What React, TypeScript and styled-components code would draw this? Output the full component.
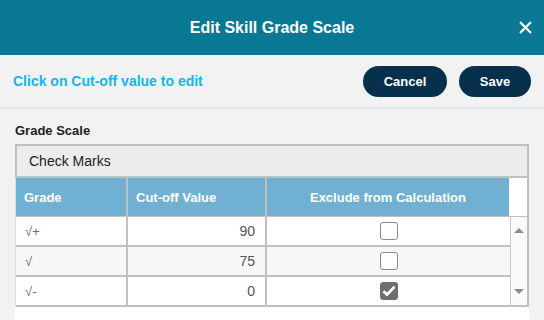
import styled, { createGlobalStyle } from 'styled-components';

const GlobalStyle = createGlobalStyle`
  body {
    margin: 0;
    background: #f2f2f2;
    font-family: 'Liberation Sans', Arial, sans-serif;
  }
`;

const Page = styled.div`
  width: 544px;
  height: 320px;
  overflow: hidden;
  background: #f2f2f2;
`;

const Header = styled.div`
  display: grid;
  grid-template-columns: 1fr auto 1fr;
  align-items: center;
  height: 55px;
  background: #087895;
`;

const Title = styled.div`
  grid-column: 2;
  color: #ffffff;
  font-size: 16px;
  font-weight: 700;
`;

const CloseButton = styled.button`
  justify-self: end;
  display: flex;
  align-items: center;
  justify-content: center;
  width: 14px;
  height: 14px;
  margin-right: 12px;
  padding: 0;
  border: 0;
  background: none;
  cursor: pointer;
`;

const Toolbar = styled.div`
  display: flex;
  align-items: center;
  justify-content: space-between;
  height: 52px;
  padding: 0 13px;
  border-bottom: 2px solid #e4e8ec;
`;

const Hint = styled.div`
  color: #17b4f0;
  font-size: 14px;
  font-weight: 700;
`;

const Actions = styled.div`
  display: flex;
  gap: 12px;
`;

const PillButton = styled.button<{ $width: number }>`
  width: ${(p) => p.$width}px;
  height: 31px;
  border: 0;
  border-radius: 16px;
  background: #07304d;
  color: #ffffff;
  font-family: 'Liberation Sans', Arial, sans-serif;
  font-size: 13px;
  font-weight: 700;
  cursor: pointer;
`;

const Content = styled.div`
  padding: 14px 15px 0;
`;

const Label = styled.div`
  color: #222222;
  font-size: 13px;
  font-weight: 700;
  line-height: 15px;
  margin-bottom: 6px;
`;

const Panel = styled.div`
  width: 514px;
  background: #ffffff;
  height: 200px;
`;

const ScaleName = styled.div`
  display: flex;
  align-items: center;
  height: 30px;
  padding-left: 12px;
  background: #ececec;
  border: 2px solid #c0c0c0;
  color: #1c1c2c;
  font-size: 14px;
`;

const Table = styled.div`
  border-left: 1px solid #dcdcdc;
  border-right: 2px solid #c0c0c0;
`;

const HeadRow = styled.div`
  display: grid;
  grid-template-columns: 112px 139px 242px 1fr;
  height: 38px;
  border-bottom: 1px solid #c0c0c0;
`;

const HeadCell = styled.div<{ $center?: boolean; $blank?: boolean }>`
  display: flex;
  align-items: center;
  justify-content: ${(p) => (p.$center ? 'center' : 'flex-start')};
  padding-left: ${(p) => (p.$center ? 0 : 8)}px;
  background: ${(p) => (p.$blank ? '#ffffff' : '#70b1d3')};
  border-right: ${(p) => (p.$blank || p.$center ? 0 : 2)}px solid #c0c0c0;
  color: #ffffff;
  font-size: 13px;
  font-weight: 700;
`;

const Body = styled.div`
  display: flex;
`;

const Rows = styled.div`
  flex: 1;
`;

const Row = styled.div<{ $alt?: boolean }>`
  display: grid;
  grid-template-columns: 112px 139px 1fr;
  height: 28px;
  border-bottom: 2px solid #c0c0c0;
  background: ${(p) => (p.$alt ? '#f7f7f7' : '#ffffff')};
`;

const Cell = styled.div<{ $align: 'left' | 'right' | 'center' }>`
  display: flex;
  align-items: center;
  justify-content: ${(p) =>
    p.$align === 'left' ? 'flex-start' : p.$align === 'right' ? 'flex-end' : 'center'};
  padding: ${(p) => (p.$align === 'left' ? '0 0 0 9px' : p.$align === 'right' ? '0 10px 0 0' : '0')};
  border-right: ${(p) => (p.$align === 'center' ? 0 : 2)}px solid #c0c0c0;
  color: #6a6a72;
  font-size: 13px;
`;

const Value = styled.span`
  color: #555555;
  font-size: 14px;
`;

const Box = styled.div<{ $checked?: boolean }>`
  display: flex;
  align-items: center;
  justify-content: center;
  box-sizing: border-box;
  width: 18px;
  height: 18px;
  border: 1px solid ${(p) => (p.$checked ? '#6e6e6e' : '#8a8a8a')};
  border-radius: 3px;
  background: ${(p) => (p.$checked ? '#6e6e6e' : '#ffffff')};
`;

const Scrollbar = styled.div`
  display: flex;
  flex-direction: column;
  justify-content: space-between;
  align-items: center;
  width: 16px;
  padding: 11px 0 11px;
  background: #fafafa;
  border-left: 1px solid #c8c8c8;
  border-bottom: 2px solid #c0c0c0;
`;

const Arrow = styled.div<{ $down?: boolean }>`
  width: 0;
  height: 0;
  border-left: 5px solid transparent;
  border-right: 5px solid transparent;
  ${(p) =>
    p.$down ? 'border-top: 5px solid #8c8c8c;' : 'border-bottom: 5px solid #8c8c8c;'}
`;

const grades = [
  { grade: '√+', cutoff: 90, excluded: false },
  { grade: '√', cutoff: 75, excluded: false },
  { grade: '√-', cutoff: 0, excluded: true },
];

const App = () => {
  return (
    <Page>
      <GlobalStyle />
      <Header>
        <Title>Edit Skill Grade Scale</Title>
        <CloseButton type='button' aria-label='Close'>
          <svg width='13' height='13' viewBox='0 0 13 13'>
            <path d='M1 1L12 12M12 1L1 12' stroke='#ffffff' strokeWidth='2.2' />
          </svg>
        </CloseButton>
      </Header>
      <Toolbar>
        <Hint>Click on Cut-off value to edit</Hint>
        <Actions>
          <PillButton type='button' $width={84}>
            Cancel
          </PillButton>
          <PillButton type='button' $width={72}>
            Save
          </PillButton>
        </Actions>
      </Toolbar>
      <Content>
        <Label>Grade Scale</Label>
        <Panel>
          <ScaleName>Check Marks</ScaleName>
          <Table>
            <HeadRow>
              <HeadCell>Grade</HeadCell>
              <HeadCell>Cut-off Value</HeadCell>
              <HeadCell $center>Exclude from Calculation</HeadCell>
              <HeadCell $blank />
            </HeadRow>
            <Body>
              <Rows>
                {grades.map((g, i) => (
                  <Row key={g.grade} $alt={i % 2 === 1}>
                    <Cell $align='left'>{g.grade}</Cell>
                    <Cell $align='right'>
                      <Value>{g.cutoff}</Value>
                    </Cell>
                    <Cell $align='center'>
                      <Box $checked={g.excluded}>
                        {g.excluded && (
                          <svg width='14' height='12' viewBox='0 0 14 12'>
                            <path
                              d='M1.5 6.2L5 9.6L12.5 1.8'
                              fill='none'
                              stroke='#ffffff'
                              strokeWidth='2.8'
                            />
                          </svg>
                        )}
                      </Box>
                    </Cell>
                  </Row>
                ))}
              </Rows>
              <Scrollbar>
                <Arrow />
                <Arrow $down />
              </Scrollbar>
            </Body>
          </Table>
        </Panel>
      </Content>
    </Page>
  );
};

export default App;
